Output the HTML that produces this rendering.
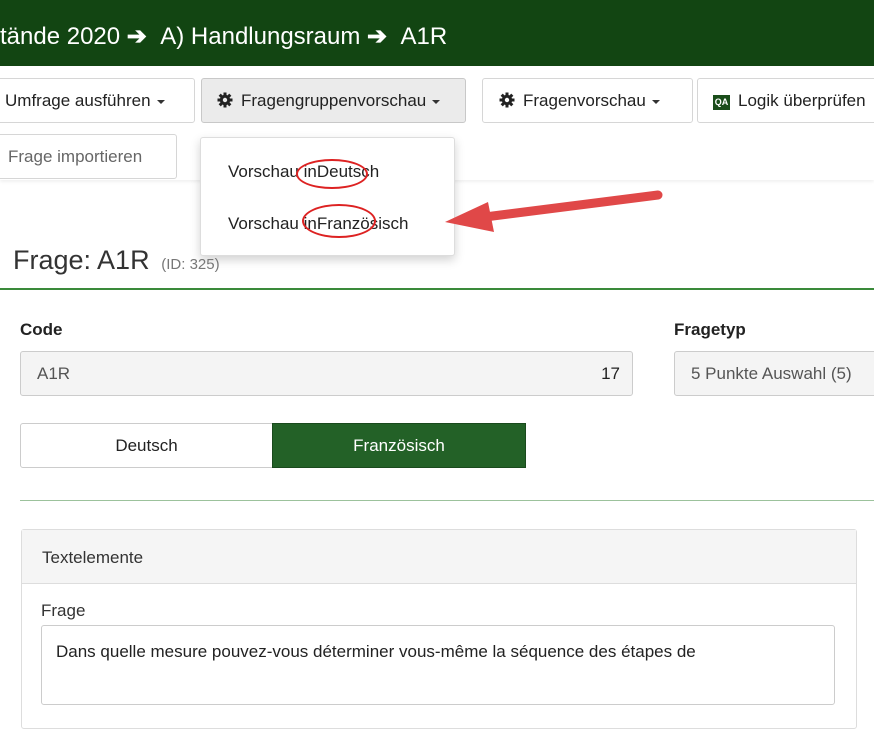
<!DOCTYPE html>
<html><head><meta charset="utf-8"><style>
*{box-sizing:border-box;margin:0;padding:0}
body{width:874px;height:670px;overflow:hidden;background:#fff;font-family:"Liberation Sans",Arial,sans-serif;color:#222;position:relative}
.a{position:absolute}
.hdr{left:0;top:0;width:874px;height:66px;background:#124512;color:#fff;font-size:24px;padding:22px 0 0 0;white-space:nowrap}
.btn{position:absolute;height:45px;border:1px solid #d6d6d6;border-radius:3px;background:#fff;font-size:17px;line-height:43px;white-space:nowrap;color:#222}
.car{display:inline-block;width:0;height:0;border-left:4px solid transparent;border-right:4px solid transparent;border-top:4px solid #333;vertical-align:middle;margin-left:6px}
.gear{vertical-align:-2px;margin-right:8px}
</style></head><body>
<div class="a hdr">tände 2020 <span style="font-weight:bold">➔</span>&nbsp;&nbsp;A) Handlungsraum <span style="font-weight:bold">➔</span>&nbsp;&nbsp;A1R</div>
<div class="a" style="left:0;top:66px;width:874px;height:114px;background:#fff;box-shadow:0 2px 3px rgba(0,0,0,.06)"></div>
<div class="btn" style="left:-5px;top:78px;width:200px;padding-left:9px">Umfrage ausführen<span class="car"></span></div>
<div class="btn" style="left:201px;top:78px;width:265px;background:#ebebeb;border-color:#c8c8c8;padding-left:15px"><svg class="gear" width="16" height="16" viewBox="0 0 16 16"><g fill="#222"><circle cx="8" cy="8" r="5.2"/><rect x="6.5" y="0.5" width="3" height="15"/><rect x="0.5" y="6.5" width="15" height="3"/><rect x="6.5" y="0.5" width="3" height="15" transform="rotate(45 8 8)"/><rect x="6.5" y="0.5" width="3" height="15" transform="rotate(-45 8 8)"/></g><circle cx="8" cy="8" r="2.2" fill="#ebebeb"/></svg>Fragengruppenvorschau<span class="car"></span></div>
<div class="btn" style="left:482px;top:78px;width:211px;padding-left:16px"><svg class="gear" width="16" height="16" viewBox="0 0 16 16"><g fill="#222"><circle cx="8" cy="8" r="5.2"/><rect x="6.5" y="0.5" width="3" height="15"/><rect x="0.5" y="6.5" width="15" height="3"/><rect x="6.5" y="0.5" width="3" height="15" transform="rotate(45 8 8)"/><rect x="6.5" y="0.5" width="3" height="15" transform="rotate(-45 8 8)"/></g><circle cx="8" cy="8" r="2.2" fill="#fff"/></svg>Fragenvorschau<span class="car"></span></div>
<div class="btn" style="left:697px;top:78px;width:200px;padding-left:15px"><span style="display:inline-block;width:17px;height:15px;background:#1a4d1a;color:#fff;font-size:9px;line-height:15px;text-align:center;font-weight:bold;vertical-align:1px;margin-right:8px">QA</span>Logik überprüfen</div>
<div class="btn" style="left:-5px;top:134px;width:182px;padding-left:12px;color:#666">Frage importieren</div>
<div class="a" style="left:200px;top:137px;width:255px;height:119px;background:#fff;border:1px solid #ddd;border-radius:3px;box-shadow:0 4px 10px rgba(0,0,0,.18);font-size:17px">
<div class="a" style="left:27px;top:24px">Vorschau inDeutsch</div>
<div class="a" style="left:27px;top:76px">Vorschau inFranzösisch</div>
<div class="a" style="left:95px;top:21px;width:72px;height:30px;border:2px solid #d22;border-radius:50%"></div>
<div class="a" style="left:101px;top:66px;width:74px;height:34px;border:2px solid #d22;border-radius:50%"></div>
</div>
<svg class="a" style="left:440px;top:185px" width="230" height="50"><line x1="218" y1="10" x2="45" y2="32" stroke="#e04848" stroke-width="9" stroke-linecap="round"/><polygon points="5,37 48,17 54,47" fill="#e04848"/></svg>
<div class="a" style="left:13px;top:245px;font-size:27px;color:#333">Frage: A1R <span style="font-size:15px;color:#777">&nbsp;(ID: 325)</span></div>
<div class="a" style="left:0;top:288px;width:874px;height:2px;background:#3a8a3a"></div>
<div class="a" style="left:20px;top:320px;font-size:17px;font-weight:bold">Code</div>
<div class="a" style="left:674px;top:320px;font-size:17px;font-weight:bold">Fragetyp</div>
<div class="a" style="left:20px;top:351px;width:613px;height:45px;background:#f4f4f4;border:1px solid #ccc;border-radius:3px;font-size:17px;color:#555;line-height:43px;padding-left:16px">A1R<span style="position:absolute;right:12px;color:#222">17</span></div>
<div class="a" style="left:674px;top:351px;width:220px;height:45px;background:#f4f4f4;border:1px solid #ccc;border-radius:3px;font-size:17px;color:#555;line-height:43px;padding-left:16px;white-space:nowrap">5 Punkte Auswahl (5)</div>
<div class="a" style="left:20px;top:423px;width:253px;height:45px;border:1px solid #ccc;border-radius:3px 0 0 3px;font-size:17px;text-align:center;line-height:43px">Deutsch</div>
<div class="a" style="left:272px;top:423px;width:254px;height:45px;background:#236127;border:1px solid #1a4a1d;color:#fff;font-size:17px;text-align:center;line-height:43px">Französisch</div>
<div class="a" style="left:20px;top:500px;width:854px;height:1px;background:#9cc29c"></div>
<div class="a" style="left:21px;top:529px;width:836px;height:200px;border:1px solid #ddd;border-radius:3px"></div>
<div class="a" style="left:22px;top:530px;width:834px;height:54px;background:#f5f5f5;border-bottom:1px solid #ddd;font-size:17px;color:#333;padding:18px 0 0 20px">Textelemente</div>
<div class="a" style="left:41px;top:601px;font-size:17px;color:#333">Frage</div>
<div class="a" style="left:41px;top:625px;width:794px;height:80px;border:1px solid #ccc;border-radius:3px;font-size:17px;color:#222;padding:16px 0 0 14px;white-space:nowrap;background:#fff">Dans quelle mesure pouvez-vous déterminer vous-même la séquence des étapes de</div>
</body></html>
